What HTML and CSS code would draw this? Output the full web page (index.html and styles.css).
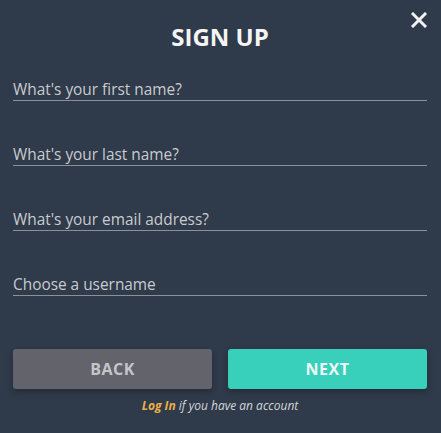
FILE: index.html
```html
<!DOCTYPE html>
<html lang="en">
<head>
  <meta charset="UTF-8" />
  <title>Sign Up</title>
  <link rel="stylesheet" href="styles.css">
</head>
<body>
  <div class="modal">
    <button class="cerrar" aria-label="Close">
      <svg width="16" height="16" viewBox="0 0 16 16">
        <path d="M2 2 L14 14 M14 2 L2 14" stroke="#f2f2f2" stroke-width="3" stroke-linecap="square"/>
      </svg>
    </button>
    <h1>SIGN UP</h1>

    <form class="formulario">
      <input type="text" placeholder="What's your first name?">
      <input type="text" placeholder="What's your last name?">
      <input type="email" placeholder="What's your email address?">
      <input type="text" placeholder="Choose a username">

      <div class="botones">
        <button type="button" class="btn btn-back">BACK</button>
        <button type="button" class="btn btn-next">NEXT</button>
      </div>
    </form>

    <p class="pie"><a href="#">Log In</a> if you have an account</p>
  </div>
</body>
</html>
```

FILE: styles.css
```css
body {
  margin: 0;
  background: #2f3a4a;
  font-family: 'Open Sans', sans-serif;
  color: #c9cbcf;
}

.modal {
  position: relative;
  padding: 21px 14px 0 13px;
}

.cerrar {
  position: absolute;
  top: 12px;
  right: 14px;
  width: 16px;
  height: 16px;
  padding: 0;
  border: none;
  background: none;
  cursor: pointer;
}

.cerrar svg {
  display: block;
}

h1 {
  margin: 0;
  font-size: 24px;
  line-height: 32px;
  font-weight: 700;
  color: #f4f4f4;
  text-align: center;
}

.formulario {
  display: flex;
  flex-direction: column;
  margin-top: 25px;
}

.formulario input {
  font-family: 'Open Sans', sans-serif;
  font-size: 15.4px;
  padding: 0;
  height: 22px;
  border: none;
  border-bottom: 1px solid #8d9097;
  background: transparent;
  color: #c9cbcf;
  outline: none;
  margin-bottom: 42px;
}

.formulario input::placeholder {
  color: #c9cbcf;
  opacity: 1;
}

.formulario input:last-of-type {
  margin-bottom: 53px;
}

.botones {
  display: flex;
  gap: 16px;
}

.btn {
  flex: 1;
  height: 40px;
  border: none;
  border-radius: 3px;
  font-family: 'Open Sans', sans-serif;
  font-size: 16px;
  font-weight: 700;
  letter-spacing: 0.5px;
  cursor: pointer;
  box-shadow: 0 3px 6px rgba(0, 0, 0, 0.25);
}

.btn-back {
  background: #62636b;
  color: #c5c6ca;
}

.btn-next {
  background: #38cfbb;
  color: #eef6f6;
}

.pie {
  margin: 8px 0 0;
  text-align: center;
  font-size: 12px;
  font-style: italic;
  color: #d4d6da;
}

.pie a {
  color: #e8b04a;
  font-weight: 700;
  text-decoration: none;
}
```
